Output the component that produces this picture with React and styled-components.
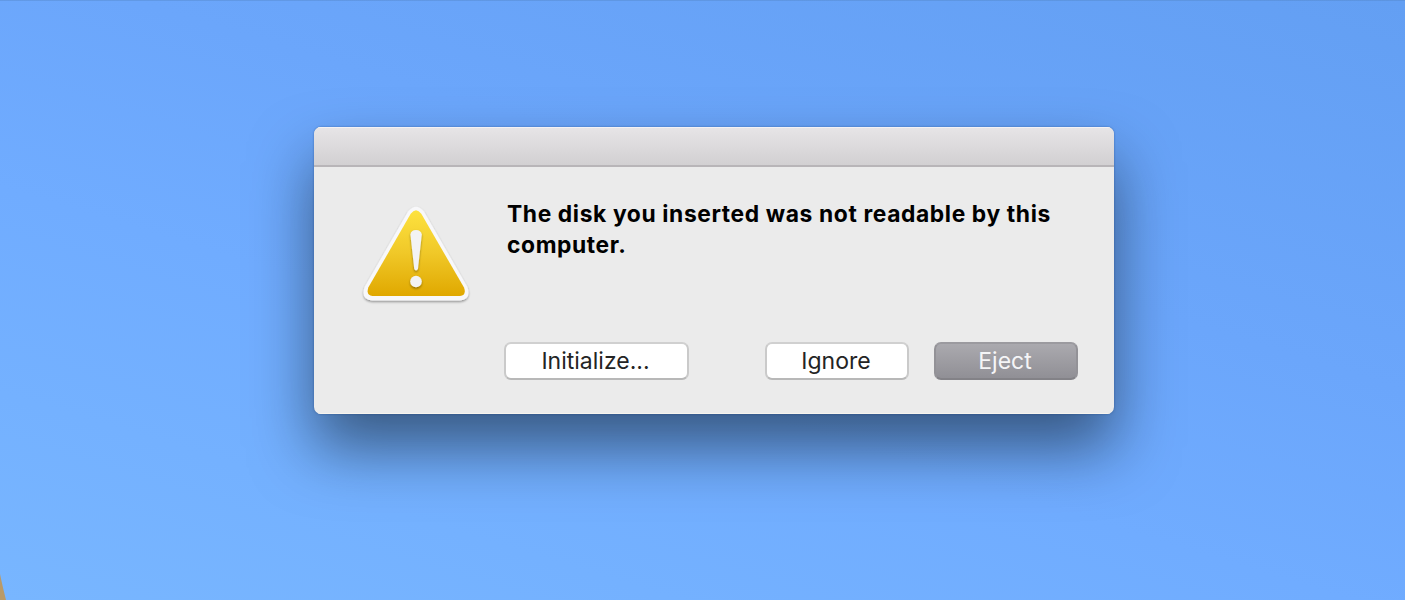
import React from "react";
import styled, { createGlobalStyle } from "styled-components";

const GlobalStyle = createGlobalStyle`
  * { box-sizing: border-box; }
  body { margin: 0; overflow: hidden; font-family: Inter, "Liberation Sans", sans-serif; }
`;

const Desktop = styled.main`
  position: relative;
  width: 1405px;
  height: 600px;
  padding: 127px 0 0 314px;
  overflow: hidden;
  background: linear-gradient(197deg, #639ff3 0%, #6ba6fb 38%, #70acff 60%, #78b6ff 100%);
  box-shadow: inset 0 1px 0 rgba(80, 130, 190, 0.35);
`;

const Peak = styled.svg`
  position: absolute;
  left: 0;
  bottom: 0;
`;

const Dialog = styled.section`
  width: 800px;
  height: 287px;
  display: flex;
  flex-direction: column;
  border-radius: 7px;
  background: #ebebeb;
  overflow: hidden;
  box-shadow:
    0 0 2px 0 rgba(20, 60, 120, 0.6),
    0 34px 62px 0 rgba(5, 15, 20, 0.53);
`;

const TitleBar = styled.header`
  height: 40px;
  flex: none;
  border-bottom: 2px solid #b8b5b8;
  background: linear-gradient(#e7e5e7, #d2d0d2);
  box-shadow: inset 0 1px 0 #f4f2f4;
`;

const Content = styled.div`
  flex: 1;
  display: grid;
  grid-template-columns: 190px 1fr;
  padding: 31px 36px 0 0;
  box-shadow: inset 0 -1px 0 #f7f4ee;
`;

const WarningIcon = styled.svg`
  margin: 3px 0 0 42px;
`;

const Details = styled.div`
  display: flex;
  flex-direction: column;
`;

const Message = styled.h1`
  height: 144px;
  margin: 0 0 0 3px;
  color: #000;
  font-size: 22.8px;
  font-weight: 700;
  line-height: 31px;
  letter-spacing: 0.62px;
  white-space: nowrap;
`;

const Actions = styled.div`
  display: flex;
`;

const Button = styled.button`
  width: ${({ $width }) => $width}px;
  height: 38px;
  margin: 0 0 0 ${({ $gap }) => $gap || 0}px;
  padding: 0 2px 0 0;
  border: 2px solid;
  border-color: ${({ $primary }) => ($primary ? "#9b9a9f #939297 #838287" : "#d0d0d0 #cacaca #b8b8b8")};
  border-radius: 7px;
  background: ${({ $primary }) => ($primary ? "linear-gradient(#acabb0, #8f8e94) border-box" : "#fff")};
  color: ${({ $primary }) => ($primary ? "#f5f5f7" : "#242424")};
  font: 400 23px/34px Inter, "Liberation Sans", sans-serif;
`;

const Warning = () => (
  <WarningIcon width="120" height="106" viewBox="356 201 120 106" aria-hidden="true">
    <defs>
      <linearGradient id="gold" x1="0" y1="0" x2="0" y2="1">
        <stop offset="0" stopColor="#fde23f" />
        <stop offset="0.5" stopColor="#f0c828" />
        <stop offset="1" stopColor="#e0a800" />
      </linearGradient>
      <filter id="drop" x="-20%" y="-20%" width="140%" height="140%">
        <feDropShadow dx="0" dy="1.4" stdDeviation="1.3" floodOpacity="0.4" />
      </filter>
    </defs>
    <path
      d="M408 211.4 Q416 202 424 211.4 L467.5 287 Q471.5 299.5 460 300.4 H372 Q360.5 299.5 364.5 287 Z"
      fill="#f8f8fa"
      filter="url(#drop)"
    />
    <path
      d="M410.7 213.8 Q416 206.5 421.3 213.8 L464 287.6 Q466.7 295.4 460 296 H372.5 Q365.8 295.4 368.3 287.6 Z"
      fill="url(#gold)"
    />
    <g fill="#f3f3f4" filter="url(#drop)">
      <path d="M410.4 234.5 Q411 230 416 230 Q421 230 421.8 234.5 L418 268.5 Q417.5 270.5 416 270.5 Q414.6 270.5 414.2 268.5 Z" />
      <circle cx="416" cy="281.5" r="5.8" />
    </g>
  </WarningIcon>
);

export default function App() {
  return (
    <>
      <GlobalStyle />
      <Desktop>
        <Dialog role="alertdialog">
          <TitleBar />
          <Content>
            <Warning />
            <Details>
              <Message>
                The disk you inserted was not readable by this
                <br />
                computer.
              </Message>
              <Actions>
                <Button $width={185}>Initialize...</Button>
                <Button $width={144} $gap={76}>Ignore</Button>
                <Button $width={144} $gap={25} $primary>Eject</Button>
              </Actions>
            </Details>
          </Content>
        </Dialog>
        <Peak width="7" height="28" viewBox="0 0 7 28" aria-hidden="true">
          <path d="M0 2 Q2 12 6 28 H0 Z" fill="#b99a68" />
        </Peak>
      </Desktop>
    </>
  );
}
